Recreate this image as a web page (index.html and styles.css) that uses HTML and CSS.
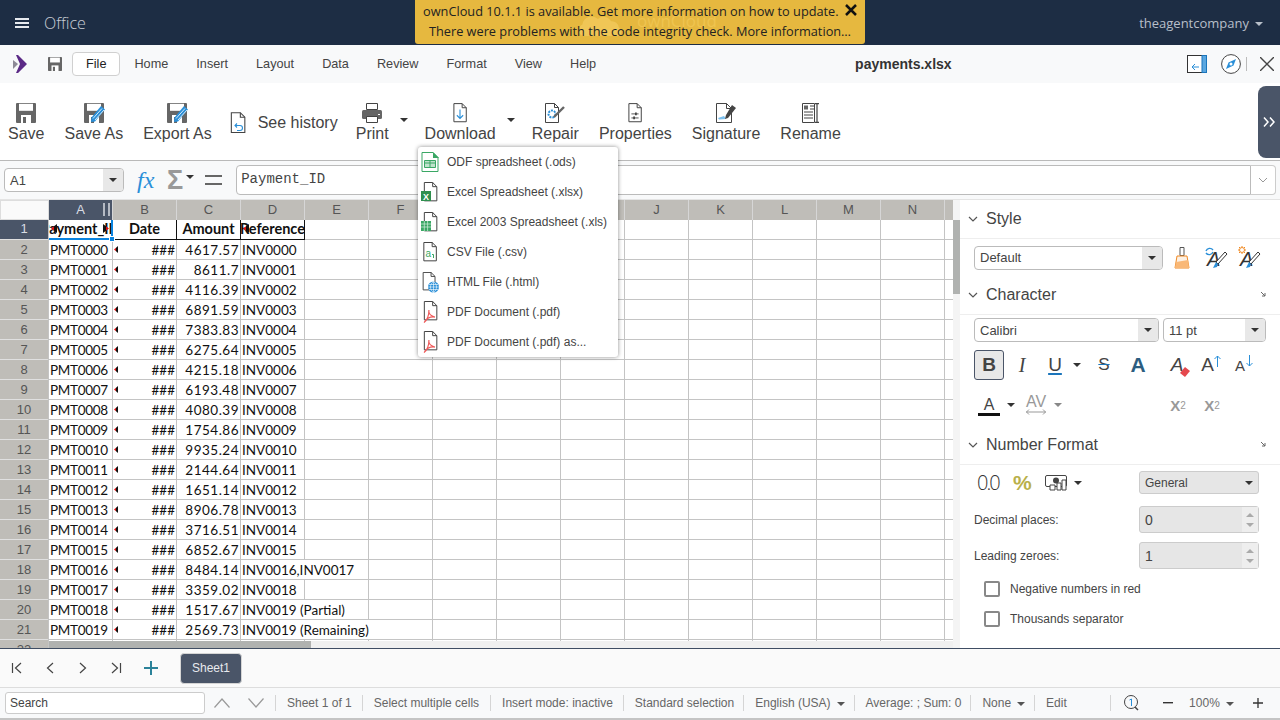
FILE: index.html
```html
<!DOCTYPE html>
<html lang="en">
<head>
  <meta charset="UTF-8" />
  <title>payments.xlsx - Office</title>
  <link rel="stylesheet" href="styles.css">
</head>
<body>
  <svg class="defs" width="0" height="0">
    <symbol id="floppy" viewBox="0 0 20 20">
      <path fill="#666" d="M1 0h18a1 1 0 0 1 1 1v18a1 1 0 0 1-1 1H1a1 1 0 0 1-1-1V1a1 1 0 0 1 1-1z"/>
      <rect fill="#fff" x="3" y="0.8" width="14" height="7"/>
      <rect fill="#fff" x="5" y="12" width="10" height="8"/>
      <rect fill="#666" x="7" y="14" width="3" height="6"/>
    </symbol>
    <symbol id="pencil" viewBox="0 0 14 16">
      <path fill="#2a8fd8" d="M10 0l4 3.500L4 15.500 0 16l.5-4.500z"/>
      <path stroke="#fff" stroke-width=".8" d="M2 12.500l9-10M4 14l9-10"/>
    </symbol>
    <symbol id="doc" viewBox="0 0 20 24">
      <path fill="#fff" stroke="#444" stroke-width="1.200" d="M2.600.6h10l5 5v17h-15z"/>
      <path fill="none" stroke="#444" stroke-width="1.200" d="M12.600.6v5h5"/>
    </symbol>
    <symbol id="pdfmark" viewBox="0 0 12 12">
      <path fill="none" stroke="#ef5a5a" stroke-width="1.100" d="M5.500 0c-.6 3 .4 5 5.500 6.500-4-.6-7.500 1-10 5C4 9 5.500 5 5.500 0z"/>
    </symbol>
  </svg>

  <header class="topbar">
    <svg class="burger" width="14" height="12" viewBox="0 0 14 12"><path fill="#e6e9ee" d="M0 1h14v2H0zM0 5h14v2H0zM0 9h14v2H0z"/></svg>
    <span class="appname">Office</span>
    <span class="account">theagentcompany<i class="caret caret-light"></i></span>
  </header>

  <div class="banner">
    <svg class="banner-cloud" width="48" height="24" viewBox="0 0 62 26"><path fill="#f0c656" d="M8 26a8 8 0 0 1-1-15 12 12 0 0 1 20-7 11 11 0 0 1 17 3 9 9 0 0 1 10 8 6 6 0 0 1 0 11z"/></svg>
    <span class="banner-mark">ownCloud</span>
    <div class="banner-line">ownCloud 10.1.1 is available. Get more information on how to update.
      <svg width="12" height="12" viewBox="0 0 12 12"><path stroke="#111" stroke-width="2.500" d="M1 1l10 10M11 1L1 11"/></svg>
    </div>
    <div class="banner-line">There were problems with the code integrity check. More information…</div>
  </div>

  <nav class="menubar">
    <svg class="logo" width="14" height="18" viewBox="0 0 14 18"><path fill="#8d8a96" d="M0 5l5 4-5 5z"/><path fill="#5b2a86" d="M3 0h2l9 9-9 9H3l4-9z"/></svg>
    <svg class="menu-save" width="14" height="14"><use href="#floppy"/></svg>
    <span class="tab tab-on">File</span>
    <span class="tab">Home</span>
    <span class="tab">Insert</span>
    <span class="tab">Layout</span>
    <span class="tab">Data</span>
    <span class="tab">Review</span>
    <span class="tab">Format</span>
    <span class="tab">View</span>
    <span class="tab">Help</span>
    <strong class="doc-title">payments.xlsx</strong>
    <div class="menu-right">
      <svg width="20" height="18" viewBox="0 0 20 18"><rect x=".5" y=".5" width="19" height="17" fill="#fff" stroke="#333"/><rect x="15" y=".5" width="4.500" height="17" fill="#5aa7e0" stroke="#1b75bb"/><path fill="none" stroke="#2a8fd8" d="M12 12H5M8 9l-3 3 3 3"/></svg>
      <svg width="20" height="20" viewBox="0 0 20 20"><circle cx="10" cy="10" r="9.400" fill="#fff" stroke="#444"/><path fill="#2a8fd8" d="M15 5l-2.500 6.500L5 15l2.500-6.500z"/><circle cx="10" cy="10" r="1.500" fill="#fff"/></svg>
      <i class="menu-sep"></i>
      <svg width="14" height="14" viewBox="0 0 14 14"><path stroke="#444" stroke-width="1.400" d="M0 0l14 14M14 0L0 14"/></svg>
    </div>
  </nav>

  <section class="toolbar">
    <div class="tool"><svg width="20" height="20"><use href="#floppy"/></svg><span>Save</span></div>
    <div class="tool"><span class="tool-ic"><svg width="20" height="20"><use href="#floppy"/></svg><svg class="tool-pen" width="14" height="16"><use href="#pencil"/></svg></span><span>Save As</span></div>
    <div class="tool"><span class="tool-ic"><svg width="20" height="20"><use href="#floppy"/></svg><svg class="tool-pen" width="14" height="16"><use href="#pencil"/></svg></span><span>Export As</span></div>
    <div class="tool-row">
      <svg width="18" height="22"><use href="#doc"/><path fill="none" stroke="#2a8fd8" stroke-width="1.100" d="M6 13.500h5a2.500 2.500 0 0 1 0 5H8M8 11.500l-2 2 2 2"/></svg>
      <span>See history</span>
    </div>
    <div class="tool tool-split">
      <svg width="20" height="20" viewBox="0 0 20 20"><path fill="#fff" stroke="#444" d="M4.500.5h11v6h-11z"/><rect y="7" width="20" height="9" rx="1.500" fill="#666"/><path fill="#fff" stroke="#444" d="M4.500 13.500h11v6h-11z"/><rect x="16" y="11" width="2" height="1" fill="#fff"/></svg>
      <span>Print</span>
    </div>
    <i class="caret tool-caret"></i>
    <div class="tool tool-split">
      <svg width="18" height="20" viewBox="0 0 20 22"><use href="#doc" width="20" height="22"/><path fill="none" stroke="#2a8fd8" stroke-width="1.200" d="M10 7v10M6.500 13.500L10 17l3.500-3.500"/></svg>
      <span>Download</span>
    </div>
    <i class="caret tool-caret"></i>
    <div class="tool">
      <svg width="20" height="20" viewBox="0 0 20 20"><path fill="#fff" stroke="#444" d="M.5.500h9l4 4v15H.5z"/><path fill="none" stroke="#444" d="M9.500.5v4h4"/><circle cx="7" cy="11" r="3.500" fill="none" stroke="#2a8fd8" stroke-width="2" stroke-dasharray="2 1"/><path stroke="#666" stroke-width="2.400" d="M9 14l10-10"/></svg>
      <span>Repair</span>
    </div>
    <div class="tool">
      <svg width="18" height="20" viewBox="0 0 20 22"><use href="#doc" width="20" height="22"/><path fill="none" stroke="#444" d="M6 12h8M6 16.500h8"/><path fill="#444" d="M10 10.500h2v3h-2zM8 15h2v3H8z"/></svg>
      <span>Properties</span>
    </div>
    <div class="tool">
      <svg width="20" height="20" viewBox="0 0 20 20"><path fill="#fff" stroke="#444" d="M.5.500h10l5 5v14H.5z"/><path fill="none" stroke="#444" d="M10.500.5v5h5"/><path fill="#7cc0ee" d="M2 15l6-2 2 3-7 .5z"/><path fill="#444" d="M16 2l4 3-8 10-3 1 1-4z"/></svg>
      <span>Signature</span>
    </div>
    <div class="tool">
      <svg width="18" height="20" viewBox="0 0 18 20"><path fill="#fff" stroke="#444" d="M.5.500h12v19H.5z"/><rect x="2" y="2.500" width="4" height="4" fill="#666"/><path stroke="#444" d="M2 9h9M2 12h9M2 15h9M8 3h4M8 6h4"/><path fill="none" stroke="#444" stroke-width="1.200" d="M13 .6h4M13 19.400h4M15 .6v18.800"/></svg>
      <span>Rename</span>
    </div>
    <div class="collapse-tab">
      <svg width="12" height="10" viewBox="0 0 12 10"><path fill="none" stroke="#fff" stroke-width="1.500" d="M1 .5L5 5 1 9.500M7 .5L11 5 7 9.500"/></svg>
    </div>
  </section>

  <section class="formulabar">
    <div class="namebox"><span>A1</span><b class="select-btn"><i class="caret"></i></b></div>
    <span class="fx">fx</span>
    <span class="sigma">Σ</span><i class="caret sigma-caret"></i>
    <svg class="equals" width="17" height="10" viewBox="0 0 17 10"><path fill="#666" d="M0 0h17v2H0zM0 8h17v2H0z"/></svg>
    <div class="formula-input">Payment_ID</div>
    <div class="formula-expand"><svg width="10" height="6" viewBox="0 0 10 6"><path fill="none" stroke="#999" d="M1 1l4 4 4-4"/></svg></div>
  </section>

  <main class="workspace">
    <div class="sheet">
      <div class="row row-head">
        <div class="corner"></div>
        <div class="ch ch-on">A<i class="ch-grip"></i></div><div class="ch">B</div><div class="ch">C</div><div class="ch">D</div><div class="ch">E</div><div class="ch">F</div><div class="ch">G</div><div class="ch">H</div><div class="ch">I</div><div class="ch">J</div><div class="ch">K</div><div class="ch">L</div><div class="ch">M</div><div class="ch">N</div><div class="ch"></div>
      </div>
      <div class="row row-title">
        <div class="rh rh-on">1</div>
        <div class="c h c-active"><span class="clip"><span>Payment_ID</span></span><i class="mark mark-big"></i><i class="mark mark-big mark-r"></i><i class="handle"></i></div>
        <div class="c h"><span class="clip"><span>Date</span></span></div>
        <div class="c h"><span class="clip"><span>Amount</span></span></div>
        <div class="c h"><span class="clip"><span>Reference</span></span><i class="mark mark-big"></i></div>
      </div>
      <div class="row"><div class="rh">2</div><div class="c p">PMT0000</div><div class="c d"><i class="mark"></i>###</div><div class="c n">4617.57</div><div class="c">INV0000</div></div>
      <div class="row"><div class="rh">3</div><div class="c p">PMT0001</div><div class="c d"><i class="mark"></i>###</div><div class="c n">8611.7</div><div class="c">INV0001</div></div>
      <div class="row"><div class="rh">4</div><div class="c p">PMT0002</div><div class="c d"><i class="mark"></i>###</div><div class="c n">4116.39</div><div class="c">INV0002</div></div>
      <div class="row"><div class="rh">5</div><div class="c p">PMT0003</div><div class="c d"><i class="mark"></i>###</div><div class="c n">6891.59</div><div class="c">INV0003</div></div>
      <div class="row"><div class="rh">6</div><div class="c p">PMT0004</div><div class="c d"><i class="mark"></i>###</div><div class="c n">7383.83</div><div class="c">INV0004</div></div>
      <div class="row"><div class="rh">7</div><div class="c p">PMT0005</div><div class="c d"><i class="mark"></i>###</div><div class="c n">6275.64</div><div class="c">INV0005</div></div>
      <div class="row"><div class="rh">8</div><div class="c p">PMT0006</div><div class="c d"><i class="mark"></i>###</div><div class="c n">4215.18</div><div class="c">INV0006</div></div>
      <div class="row"><div class="rh">9</div><div class="c p">PMT0007</div><div class="c d"><i class="mark"></i>###</div><div class="c n">6193.48</div><div class="c">INV0007</div></div>
      <div class="row"><div class="rh">10</div><div class="c p">PMT0008</div><div class="c d"><i class="mark"></i>###</div><div class="c n">4080.39</div><div class="c">INV0008</div></div>
      <div class="row"><div class="rh">11</div><div class="c p">PMT0009</div><div class="c d"><i class="mark"></i>###</div><div class="c n">1754.86</div><div class="c">INV0009</div></div>
      <div class="row"><div class="rh">12</div><div class="c p">PMT0010</div><div class="c d"><i class="mark"></i>###</div><div class="c n">9935.24</div><div class="c">INV0010</div></div>
      <div class="row"><div class="rh">13</div><div class="c p">PMT0011</div><div class="c d"><i class="mark"></i>###</div><div class="c n">2144.64</div><div class="c">INV0011</div></div>
      <div class="row"><div class="rh">14</div><div class="c p">PMT0012</div><div class="c d"><i class="mark"></i>###</div><div class="c n">1651.14</div><div class="c">INV0012</div></div>
      <div class="row"><div class="rh">15</div><div class="c p">PMT0013</div><div class="c d"><i class="mark"></i>###</div><div class="c n">8906.78</div><div class="c">INV0013</div></div>
      <div class="row"><div class="rh">16</div><div class="c p">PMT0014</div><div class="c d"><i class="mark"></i>###</div><div class="c n">3716.51</div><div class="c">INV0014</div></div>
      <div class="row"><div class="rh">17</div><div class="c p">PMT0015</div><div class="c d"><i class="mark"></i>###</div><div class="c n">6852.67</div><div class="c">INV0015</div></div>
      <div class="row"><div class="rh">18</div><div class="c p">PMT0016</div><div class="c d"><i class="mark"></i>###</div><div class="c n">8484.14</div><div class="c span2">INV0016,INV0017</div></div>
      <div class="row"><div class="rh">19</div><div class="c p">PMT0017</div><div class="c d"><i class="mark"></i>###</div><div class="c n">3359.02</div><div class="c">INV0018</div></div>
      <div class="row"><div class="rh">20</div><div class="c p">PMT0018</div><div class="c d"><i class="mark"></i>###</div><div class="c n">1517.67</div><div class="c span2">INV0019 (Partial)</div></div>
      <div class="row"><div class="rh">21</div><div class="c p">PMT0019</div><div class="c d"><i class="mark"></i>###</div><div class="c n">2569.73</div><div class="c span3">INV0019 (Remaining)</div></div>
      <div class="row"><div class="rh">22</div></div>
      <div class="scroll-v"></div>
      <div class="scroll-h"></div>
    </div>

    <aside class="sidebar">
      <div class="panel-head"><svg class="chev" width="10" height="6" viewBox="0 0 10 6"><path fill="none" stroke="#555" stroke-width="1.200" d="M1 1l4 4 4-4"/></svg>Style</div>
      <div class="panel-body style-row">
        <div class="select select-style"><span>Default</span><b class="select-btn"><i class="caret"></i></b></div>
        <svg class="style-a" width="16" height="22" viewBox="0 0 16 22"><path fill="#fff" stroke="#555" d="M6 .5h4v8H6z"/><path fill="#fdf1e4" stroke="#f08a24" d="M3 9h10l2 12H1z"/><path fill="#f9b877" d="M2 15l12-2 1 8H1z"/></svg>
        <svg class="style-b" width="24" height="24" viewBox="0 0 24 24"><path fill="none" stroke="#2a8fd8" stroke-width="1.400" d="M2 5a4 4 0 0 1 7-1M9 6a4 4 0 0 1-7 1"/><text x="3" y="20" class="svg-a">A</text><path fill="#fff" stroke="#333" d="M23 8L14 18l-2-2 9-10z"/><path fill="#2a8fd8" d="M12 16l2 2-1 3-4 1z"/></svg>
        <svg class="style-c" width="24" height="24" viewBox="0 0 24 24"><circle cx="5" cy="4" r="2.500" fill="none" stroke="#f08a24"/><path stroke="#f08a24" d="M5 0v1M5 7v1M1 4h1M8 4h1M2 1l1 1M7 6l1 1M8 1L7 2M3 6L2 7"/><text x="3" y="20" class="svg-a">A</text><path fill="#fff" stroke="#333" d="M23 8L14 18l-2-2 9-10z"/><path fill="#2a8fd8" d="M12 16l2 2-1 3-4 1z"/></svg>
      </div>

      <div class="panel-head"><svg class="chev" width="10" height="6" viewBox="0 0 10 6"><path fill="none" stroke="#555" stroke-width="1.200" d="M1 1l4 4 4-4"/></svg>Character
        <svg class="launcher" width="6" height="6" viewBox="0 0 6 6"><path fill="none" stroke="#666" d="M1 1l4 4M5 2v3H2"/></svg></div>
      <div class="panel-body char-body">
        <div class="font-row">
          <div class="select select-font"><span>Calibri</span><b class="select-btn"><i class="caret"></i></b></div>
          <div class="select select-size"><span>11 pt</span><b class="select-btn"><i class="caret"></i></b></div>
        </div>
        <div class="btn-row">
          <span class="fbtn fbtn-on">B</span>
          <span class="fbtn fbtn-i">I</span>
          <span class="fbtn fbtn-u">U</span>
          <i class="caret fcaret"></i>
          <span class="fbtn fbtn-s">S</span>
          <span class="fbtn fbtn-a">A</span>
          <span class="fbtn fbtn-e">A<svg class="eraser" width="12" height="10" viewBox="0 0 12 10"><path fill="#e5484d" d="M7 0l5 4-5 6-5-4z"/></svg></span>
          <span class="fbtn fbtn-g">A<svg width="7" height="12" viewBox="0 0 7 12"><path fill="none" stroke="#2a8fd8" d="M3.500 12V1M.5 4l3-3 3 3"/></svg></span>
          <span class="fbtn fbtn-sm">A<svg width="7" height="12" viewBox="0 0 7 12"><path fill="none" stroke="#2a8fd8" d="M3.500 0v11M.5 8l3 3 3-3"/></svg></span>
        </div>
        <div class="btn-row btn-row2">
          <span class="fbtn fbtn-color">A</span>
          <i class="caret fcaret"></i>
          <span class="fbtn fbtn-av">AV<svg width="20" height="6" viewBox="0 0 20 6"><path fill="none" stroke="#999" d="M0 3h20M3 .5L.5 3 3 5.500M17 .5L19.500 3 17 5.500"/></svg></span>
          <i class="caret fcaret caret-grey"></i>
          <span class="fbtn fbtn-x">X<sup>2</sup></span>
          <span class="fbtn fbtn-x2">X<sub>2</sub></span>
        </div>
      </div>

      <div class="panel-head"><svg class="chev" width="10" height="6" viewBox="0 0 10 6"><path fill="none" stroke="#555" stroke-width="1.200" d="M1 1l4 4 4-4"/></svg>Number Format
        <svg class="launcher" width="6" height="6" viewBox="0 0 6 6"><path fill="none" stroke="#666" d="M1 1l4 4M5 2v3H2"/></svg></div>
      <div class="panel-body num-body">
        <div class="num-row">
          <span class="zero-zero">0.0</span>
          <span class="percent">%</span>
          <svg width="22" height="16" viewBox="0 0 22 16"><rect x=".5" y=".5" width="21" height="11" rx="1.500" fill="#fff" stroke="#444"/><circle cx="11" cy="5.500" r="3" fill="#444"/><path fill="#fff" stroke="#444" d="M5 10h5v5H5zM12 8h4v7h-4zM17 5h4v10h-4z"/></svg>
          <i class="caret num-caret"></i>
          <div class="num-select"><span>General</span><i class="caret"></i></div>
        </div>
        <div class="field"><label>Decimal places:</label><div class="spin"><span>0</span><b class="spin-btn"><i class="tri-up"></i><i class="tri-down"></i></b></div></div>
        <div class="field"><label>Leading zeroes:</label><div class="spin"><span>1</span><b class="spin-btn"><i class="tri-up"></i><i class="tri-down"></i></b></div></div>
        <div class="check"><i class="box"></i>Negative numbers in red</div>
        <div class="check"><i class="box"></i>Thousands separator</div>
      </div>
    </aside>
  </main>

  <section class="tabsbar">
    <svg class="nav-ic" width="12" height="12" viewBox="0 0 12 12"><path fill="none" stroke="#444" stroke-width="1.200" d="M1.500 1v10M10 1L4.500 6l5.500 5"/></svg>
    <svg class="nav-ic" width="12" height="12" viewBox="0 0 12 12"><path fill="none" stroke="#444" stroke-width="1.200" d="M9 1L3.500 6 9 11"/></svg>
    <svg class="nav-ic" width="12" height="12" viewBox="0 0 12 12"><path fill="none" stroke="#444" stroke-width="1.200" d="M3 1l5.500 5L3 11"/></svg>
    <svg class="nav-ic" width="12" height="12" viewBox="0 0 12 12"><path fill="none" stroke="#444" stroke-width="1.200" d="M10.500 1v10M2 1l5.500 5L2 11"/></svg>
    <svg class="nav-ic nav-add" width="14" height="14" viewBox="0 0 14 14"><path stroke="#2b8299" stroke-width="2" d="M7 0v14M0 7h14"/></svg>
    <span class="sheet-tab">Sheet1</span>
  </section>

  <footer class="statusbar">
    <div class="search">Search</div>
    <svg class="st-chev" width="16" height="10" viewBox="0 0 16 10"><path fill="none" stroke="#999" stroke-width="1.200" d="M.5 9.500L8 1l7.500 8.500"/></svg>
    <svg class="st-chev" width="16" height="10" viewBox="0 0 16 10"><path fill="none" stroke="#999" stroke-width="1.200" d="M.5.5L8 9l7.500-8.500"/></svg>
    <span class="st-item st-first">Sheet 1 of 1</span>
    <span class="st-item st-wide">Select multiple cells</span>
    <span class="st-item">Insert mode: inactive</span>
    <span class="st-item st-tight">Standard selection</span>
    <span class="st-item st-tight">English (USA)<i class="caret st-caret"></i></span>
    <span class="st-item st-tight">Average: ; Sum: 0</span>
    <span class="st-item st-tight">None<i class="caret st-caret"></i></span>
    <span class="st-item st-edit">Edit</span>
    <svg class="st-zoom" width="16" height="18" viewBox="0 0 16 18"><circle cx="7" cy="8" r="6.500" fill="none" stroke="#444"/><path stroke="#444" stroke-width="1.500" d="M11 13l3 3"/><path fill="none" stroke="#2a8fd8" d="M5.500 6l2-1v7"/></svg>
    <svg class="st-minus" width="10" height="2" viewBox="0 0 10 2"><path fill="#333" d="M0 0h10v1.400H0z"/></svg>
    <span class="st-pct">100%<i class="caret st-caret"></i></span>
    <svg class="st-plus" width="10" height="10" viewBox="0 0 10 10"><path stroke="#333" stroke-width="1.300" d="M5 0v10M0 5h10"/></svg>
  </footer>

  <div class="dropdown">
    <div class="dd-item">
      <svg width="18" height="20" viewBox="0 0 18 20"><path fill="#fff" stroke="#3aa764" d="M1 .5h11l5 5v14H1z"/><path fill="#3aa764" d="M12 0l6 6h-6z"/><path fill="#bfe3cc" stroke="#3aa764" d="M3.500 8.500h11v7h-11z"/><path stroke="#3aa764" d="M3.500 11h11M9 8.500v7"/></svg>
      ODF spreadsheet (.ods)
    </div>
    <div class="dd-item">
      <svg width="18" height="20" viewBox="0 0 18 20"><use href="#doc" x="1" width="17" height="20"/><rect y="9" width="10" height="10" fill="#2f8f4e"/><text x="2" y="17.500" class="svg-x">X</text></svg>
      Excel Spreadsheet (.xlsx)
    </div>
    <div class="dd-item">
      <svg width="18" height="20" viewBox="0 0 18 20"><use href="#doc" x="1" width="17" height="20"/><rect y="9" width="10" height="10" fill="#3aa764"/><path stroke="#d5eedd" stroke-width=".7" d="M0 12h10M0 15h10M3.300 9v10M6.600 9v10"/></svg>
      Excel 2003 Spreadsheet (.xls)
    </div>
    <div class="dd-item">
      <svg width="18" height="20" viewBox="0 0 18 20"><use href="#doc" width="18" height="20"/><text x="4.500" y="15" class="svg-csv">a</text><path fill="none" stroke="#3aa764" d="M11 12.500h1.500V16"/></svg>
      CSV File (.csv)
    </div>
    <div class="dd-item">
      <svg width="18" height="21" viewBox="0 0 18 21"><use href="#doc" width="16" height="19"/><circle cx="12.500" cy="15" r="5.500" fill="#2a8fd8"/><path fill="none" stroke="#fff" stroke-width=".6" d="M7 15h11M12.500 9.500v11M8 12.500h9M8 17.500h9M12.500 9.500c-4 3-4 8 0 11 4-3 4-8 0-11z"/></svg>
      HTML File (.html)
    </div>
    <div class="dd-item">
      <svg width="18" height="22" viewBox="0 0 18 22"><use href="#doc" x="1" width="17" height="20"/><svg x="2" y="9" width="13" height="13"><use href="#pdfmark"/></svg></svg>
      PDF Document (.pdf)
    </div>
    <div class="dd-item">
      <svg width="18" height="22" viewBox="0 0 18 22"><use href="#doc" x="1" width="17" height="20"/><svg x="2" y="9" width="13" height="13"><use href="#pdfmark"/></svg></svg>
      PDF Document (.pdf) as...
    </div>
  </div>
</body>
</html>
```

FILE: styles.css
```css
* {
  box-sizing: border-box;
}

html, body {
  height: 100%;
}

body {
  margin: 0;
  display: flex;
  flex-direction: column;
  overflow: hidden;
  font-family: "Liberation Sans", Arial, sans-serif;
  font-size: 13px;
  color: #333;
  background: #fff;
}

i, b {
  font-style: normal;
  font-weight: normal;
}

.defs {
  position: absolute;
}

.caret {
  display: inline-block;
  width: 0;
  height: 0;
  border-left: 4px solid transparent;
  border-right: 4px solid transparent;
  border-top: 4px solid #333;
}

.caret-light {
  border-top-color: #b8bfc9;
  margin-left: 6px;
  vertical-align: 2px;
}

.caret-grey {
  border-top-color: #888;
}

/* top bar */
.topbar {
  height: 45px;
  flex: none;
  display: flex;
  align-items: center;
  padding: 0 17px 0 15px;
  background: #1d2d44;
  font-family: "Open Sans", sans-serif;
}

.appname {
  margin-left: 15px;
  font-size: 16px;
  font-weight: 300;
  color: #c9ced6;
}

.account {
  margin-left: auto;
  font-size: 13px;
  color: #b8bfc9;
}

.banner {
  position: absolute;
  left: 415px;
  top: 0;
  width: 450px;
  height: 44px;
  padding-top: 1px;
  background: #e6b83f;
  border-radius: 0 0 3px 3px;
  font-family: "Open Sans", sans-serif;
  font-size: 12.75px;
  line-height: 20px;
  color: #222;
  text-align: center;
  z-index: 3;
}

.banner-line {
  position: relative;
}

.banner-line svg {
  margin-left: 3px;
}

.banner-cloud {
  position: absolute;
  left: 162px;
  top: 14px;
}

.banner-mark {
  position: absolute;
  left: 222px;
  top: 11px;
  font-size: 17px;
  color: #efc44f;
}

/* menu bar */
.menubar {
  height: 38px;
  flex: none;
  display: flex;
  align-items: center;
  padding-left: 13px;
  background: #f8f9fa;
  font-size: 12.7px;
}

.menu-save {
  margin: 0 10px 0 21px;
}

.tab {
  padding: 0 14px;
  height: 24px;
  line-height: 24px;
  color: #444;
}

.tab-on {
  padding: 0 13px;
  border: 1px solid #d0d0d0;
  border-radius: 4px;
  background: #fff;
  line-height: 22px;
  color: #222;
}

.doc-title {
  margin-left: 245px;
  font-size: 14px;
  color: #333;
}

.menu-right {
  margin-left: auto;
  padding-right: 6px;
  display: flex;
  align-items: center;
  gap: 14px;
}

.menu-sep {
  width: 1px;
  height: 14px;
  margin: 0 -1px 0 -9px;
  background: #bbb;
}

/* toolbar */
.toolbar {
  height: 78px;
  flex: none;
  position: relative;
  display: flex;
  align-items: flex-start;
  padding: 20px 0 0 8px;
  border-bottom: 1px solid #b9b9b9;
  font-size: 16px;
  color: #444;
}

.tool {
  display: flex;
  flex-direction: column;
  align-items: center;
  gap: 1px;
  margin-right: 20px;
  line-height: 19px;
}

.tool svg {
  display: block;
}

.tool-ic {
  position: relative;
  display: block;
  height: 20px;
}

.tool-pen {
  position: absolute;
  left: 7px;
  top: 3px;
}

.tool-row {
  display: flex;
  align-items: center;
  gap: 11px;
  margin: 1px 18px 0 -4px;
  height: 38px;
}

.tool-row svg {
  margin-left: 1px;
}

.tool-split {
  margin-right: 0;
}

.tool-caret {
  margin: 15px 17px 0 11px;
}

.collapse-tab {
  position: absolute;
  right: 0;
  top: 3px;
  width: 22px;
  height: 72px;
  display: flex;
  align-items: center;
  justify-content: center;
  background: #4a5568;
  border-radius: 8px 0 0 8px;
}

/* formula bar */
.formulabar {
  height: 39px;
  flex: none;
  display: flex;
  align-items: center;
  padding: 0 4px;
  background: #f8f9fa;
  border-bottom: 1px solid #e4e4e4;
}

.namebox, .select {
  display: flex;
  align-items: center;
  justify-content: space-between;
  height: 24px;
  padding-left: 5px;
  background: #fff;
  border: 1px solid #bbb;
  border-radius: 4px;
  overflow: hidden;
  color: #444;
}

.namebox {
  width: 120px;
}

.select-btn {
  width: 20px;
  height: 100%;
  display: flex;
  align-items: center;
  justify-content: center;
  background: #e8e8e8;
}

.fx {
  margin-left: 13px;
  width: 20px;
  font: italic 24px "Liberation Serif", serif;
  color: #2a8fd8;
}

.sigma {
  margin-left: 10px;
  font-size: 27px;
  font-weight: 700;
  line-height: 24px;
  color: #999;
}

.sigma-caret {
  margin: 0 0 6px 3px;
}

.equals {
  margin: 0 14px 0 11px;
}

.formula-input {
  flex: 1;
  height: 30px;
  padding-left: 4px;
  background: #fff;
  border: 1px solid #bbb;
  border-radius: 4px 0 0 4px;
  font: 14px/26px "Liberation Mono", monospace;
  color: #444;
}

.formula-expand {
  width: 25px;
  height: 30px;
  display: flex;
  align-items: center;
  justify-content: center;
  background: #fff;
  border: 1px solid #ccc;
  border-left: 0;
  border-radius: 0 4px 4px 0;
}

/* workspace */
.workspace {
  height: 448px;
  flex: none;
  display: flex;
}

.sheet {
  position: relative;
  width: 960px;
  overflow: hidden;
  font-family: Lato, sans-serif;
  font-size: 13.5px;
  color: #111;
}

.row {
  display: grid;
  grid-template-columns: 49px repeat(14, 64px) 15px;
  grid-template-rows: 19px;
  height: 20px;
  line-height: 20px;
  border-bottom: 1px solid #c4c4c4;
  background: linear-gradient(90deg, transparent 63px, #c4c4c4 63px) 49px 0 / 64px 100% repeat-x;
}

.row-head {
  grid-template-rows: 20px;
  height: 20px;
  background: #bfbdb8;
  border-bottom: 0;
  font-family: "Liberation Sans", sans-serif;
  font-size: 13px;
  line-height: 19px;
  color: #555;
  text-align: center;
}

.corner {
  background: #fafafa;
  border: 1px solid #ddd;
}

.ch {
  position: relative;
  border-right: 1px solid #d6d6d6;
}

.ch-on {
  background: #4a5568;
  color: #d8dce3;
}

.ch-grip {
  position: absolute;
  right: 2px;
  top: 3px;
  width: 7px;
  height: 13px;
  border-left: 2px solid #b5bac4;
  border-right: 2px solid #b5bac4;
}

.rh {
  background: #bfbdb8;
  margin: 0 1px -1px 0;
  border-bottom: 1px solid #e0e0e0;
  font-family: "Liberation Sans", sans-serif;
  font-size: 13px;
  color: #555;
  text-align: center;
}

.rh-on {
  background: #4a5568;
  color: #d8dce3;
}

.c {
  position: relative;
  padding: 0 1px;
  border-right: 1px solid #c4c4c4;
  white-space: nowrap;
  overflow: hidden;
  background: #fff;
}

.p {
  letter-spacing: -.3px;
}

.n {
  letter-spacing: .5px;
}

.n, .d {
  text-align: right;
}

.span2 {
  grid-column: span 2;
}

.span3 {
  grid-column: span 3;
}

.row-title {
  line-height: 17px;
}

.h {
  height: 20px;
  border-right-color: #111;
  border-bottom: 1px solid #111;
  padding: 0;
  font-size: 14.5px;
  font-weight: 700;
}

.clip {
  display: flex;
  justify-content: center;
  width: 100%;
  overflow: hidden;
}

.clip span {
  flex: none;
}

.c-active {
  overflow: visible;
  border-right: 2px solid #0a84e0;
  border-bottom: 2px solid #0a84e0;
  z-index: 1;
}

.handle {
  position: absolute;
  right: -4px;
  bottom: -4px;
  width: 6px;
  height: 6px;
  background: #0a84e0;
  border: 1px solid #fff;
}

.mark {
  position: absolute;
  left: 1px;
  top: 6px;
  width: 4px;
  height: 7px;
  background: linear-gradient(90deg, #e01010 50%, #111 50%);
  clip-path: polygon(100% 0, 0 50%, 100% 100%);
}

.mark-big {
  left: 2px;
  width: 6px;
  height: 9px;
  top: 4px;
}

.mark-r {
  left: auto;
  right: 2px;
  background: linear-gradient(90deg, #111 50%, #e01010 50%);
  clip-path: polygon(0 0, 100% 50%, 0 100%);
}

.scroll-v {
  position: absolute;
  left: 953px;
  top: 0;
  width: 7px;
  height: 448px;
  background: linear-gradient(#f4f4f4 20px, #b0b2b0 20px, #b0b2b0 94px, #f4f4f4 94px);
}

.scroll-h {
  position: absolute;
  left: 49px;
  top: 441px;
  width: 904px;
  height: 7px;
  background: linear-gradient(90deg, #b0b2b0 262px, #f0f0f0 262px);
}

/* sidebar */
.sidebar {
  width: 320px;
  overflow: hidden;
  background: #fff;
}

.panel-head {
  position: relative;
  height: 39px;
  display: flex;
  align-items: center;
  padding-left: 8px;
  border-bottom: 1px solid #eee;
  font-size: 16px;
  color: #444;
}

.chev {
  margin-right: 8px;
}

.launcher {
  position: absolute;
  right: 14px;
  top: 15px;
}

.panel-body {
  padding: 0 14px;
}

.style-row {
  height: 37px;
  display: flex;
  align-items: center;
}

.select-style {
  width: 189px;
}

.style-a {
  margin-left: 11px;
}

.style-b {
  margin-left: 14px;
}

.style-c {
  margin-left: 9px;
}

.svg-a {
  font: italic 20px "Liberation Sans", sans-serif;
  fill: #333;
}

.char-body {
  height: 111px;
  padding-top: 3px;
}

.font-row {
  display: flex;
  gap: 4px;
}

.select-font {
  width: 185px;
}

.select-size {
  width: 103px;
}

.btn-row {
  display: flex;
  align-items: center;
  height: 30px;
  margin-top: 8px;
}

.btn-row2 {
  margin-top: 10px;
}

.fbtn {
  position: relative;
  width: 30px;
  height: 30px;
  margin-right: 3px;
  display: flex;
  align-items: center;
  justify-content: center;
  font-size: 19px;
  color: #444;
}

.fbtn-on {
  background: #e8e8e8;
  border: 1px solid #4a5568;
  border-radius: 3px;
  font-weight: 700;
}

.fbtn-i {
  font: italic 20px "Liberation Serif", serif;
}

.fbtn-u {
  text-decoration: underline 2px #1b75bb;
  text-underline-offset: 2px;
}

.fcaret {
  margin-right: 8px;
}

.fbtn-s {
  margin-right: 4px;
  text-decoration: line-through;
  text-decoration-color: #1b75bb;
  font-size: 17px;
}

.fbtn-a {
  font-weight: 700;
  font-size: 21px;
  color: #2c5d80;
  margin-right: 9px;
}

.fbtn-e {
  margin-right: 4px;
  font-style: italic;
}

.eraser {
  position: absolute;
  right: 2px;
  bottom: 3px;
}

.fbtn-g svg {
  margin: -8px 0 0 0;
}

.fbtn-sm {
  font-size: 15px;
}

.fbtn-sm svg {
  margin: -8px 0 0 1px;
}

.fbtn-color {
  height: 22px;
  width: 22px;
  margin: 0 7px 0 4px;
  font-size: 16px;
  box-shadow: inset 0 -3px 0 #111;
}

.fbtn-av {
  flex-direction: column;
  font-size: 16px;
  line-height: 14px;
  color: #999;
  width: 22px;
  margin: 0 7px 0 2px;
}

.fbtn-x, .fbtn-x2 {
  font-size: 15px;
  font-weight: 700;
  color: #999;
  width: 24px;
  margin-right: 10px;
}

.fbtn-x {
  margin-left: 96px;
}

.fbtn sup, .fbtn sub {
  font-size: 10px;
  font-weight: 400;
}

.num-body {
  padding: 6px 21px 0 14px;
}

.num-row {
  display: flex;
  align-items: center;
  height: 23px;
  padding-left: 3px;
}

.zero-zero {
  width: 24px;
  font-family: "Open Sans", sans-serif;
  font-size: 20px;
  font-weight: 300;
  letter-spacing: -2px;
  color: #333;
}

.percent {
  margin: 0 13px 0 12px;
  font-size: 21px;
  font-weight: 700;
  color: #b9b04a;
}

.num-caret {
  margin-left: 7px;
}

.num-select {
  margin-left: auto;
  width: 120px;
  height: 23px;
  display: flex;
  align-items: center;
  justify-content: space-between;
  padding: 0 5px;
  background: #e6e6e6;
  border: 1px solid #ccc;
  border-radius: 3px;
  font-size: 12px;
  color: #444;
}

.field {
  display: flex;
  align-items: center;
  justify-content: space-between;
  height: 27px;
  margin-top: 9px;
  font-size: 12px;
  color: #444;
}

.num-row + .field {
  margin-top: 12px;
}

.spin {
  position: relative;
  width: 120px;
  height: 27px;
  padding-left: 5px;
  display: flex;
  align-items: center;
  justify-content: space-between;
  background: #e6e6e6;
  border: 1px solid #ccc;
  border-radius: 3px;
  font-size: 14px;
}

.spin-btn {
  width: 16px;
  height: 100%;
  display: flex;
  flex-direction: column;
  align-items: center;
  justify-content: center;
  gap: 6px;
  background: #eee;
}

.tri-up, .tri-down {
  width: 0;
  height: 0;
  border-left: 4px solid transparent;
  border-right: 4px solid transparent;
}

.tri-up {
  border-bottom: 4px solid #aaa;
}

.tri-down {
  border-top: 4px solid #aaa;
}

.check {
  display: flex;
  align-items: center;
  gap: 10px;
  height: 30px;
  padding-left: 10px;
  font-size: 12px;
  color: #444;
}

.field + .check {
  margin-top: 5px;
}

.box {
  width: 16px;
  height: 16px;
  border: 2px solid #888;
  border-radius: 2px;
  background: #fff;
}

/* tabs */
.tabsbar {
  height: 40px;
  flex: none;
  display: flex;
  align-items: center;
  padding-left: 11px;
  background: #fafafa;
  border-top: 1px solid #3f4d63;
  border-bottom: 1px solid #ddd;
}

.nav-ic {
  margin-right: 21px;
}

.nav-add {
  margin: 0 22px 0 1px;
}

.sheet-tab {
  width: 62px;
  height: 31px;
  line-height: 29px;
  text-align: center;
  background: #4a5568;
  border: 1px solid #d5d5d5;
  border-radius: 4px;
  font-size: 12px;
  color: #e8eaee;
}

/* status bar */
.statusbar {
  height: 32px;
  flex: none;
  display: flex;
  align-items: center;
  padding-left: 5px;
  background: #f8f9fa;
  border-bottom: 2px solid #c4c4c4;
  font-size: 12px;
  color: #666;
}

.search {
  width: 200px;
  height: 22px;
  padding-left: 4px;
  line-height: 20px;
  background: #fff;
  border: 1px solid #ccc;
  border-radius: 3px;
  color: #444;
}

.st-chev {
  margin: 0 0 0 9px;
}

.st-chev + .st-chev {
  margin-left: 18px;
}

.st-item {
  padding: 0 10px 0 11px;
  height: 16px;
  line-height: 16px;
  border-right: 1px solid #d5d5d5;
  white-space: nowrap;
}

.st-first {
  margin-left: 11px;
  border-left: 1px solid #d5d5d5;
}

.st-wide {
  padding-right: 11px;
}

.st-tight {
  padding-right: 9px;
}

.st-caret {
  margin-left: 6px;
  border-top-color: #555;
  vertical-align: 1px;
}

.st-edit {
  width: 76px;
}

.st-zoom {
  margin-left: 13px;
}

.st-minus {
  margin-left: 23px;
}

.st-pct {
  margin-left: 16px;
}

.st-plus {
  margin-left: 19px;
}

/* download menu */
.dropdown {
  position: absolute;
  left: 418px;
  top: 147px;
  width: 200px;
  height: 210px;
  background: #fff;
  border-radius: 3px;
  box-shadow: 0 0 4px rgba(0, 0, 0, .45);
  z-index: 4;
  font-size: 12px;
  color: #444;
}

.dd-item {
  display: flex;
  align-items: center;
  gap: 8px;
  height: 30px;
  padding-left: 3px;
  white-space: nowrap;
}

.dd-item svg {
  flex: none;
  overflow: visible;
}

.svg-x {
  font: bold 9px "Liberation Sans", sans-serif;
  fill: #fff;
}

.svg-csv {
  font: 10px "Liberation Sans", sans-serif;
  fill: #3aa764;
}
```
